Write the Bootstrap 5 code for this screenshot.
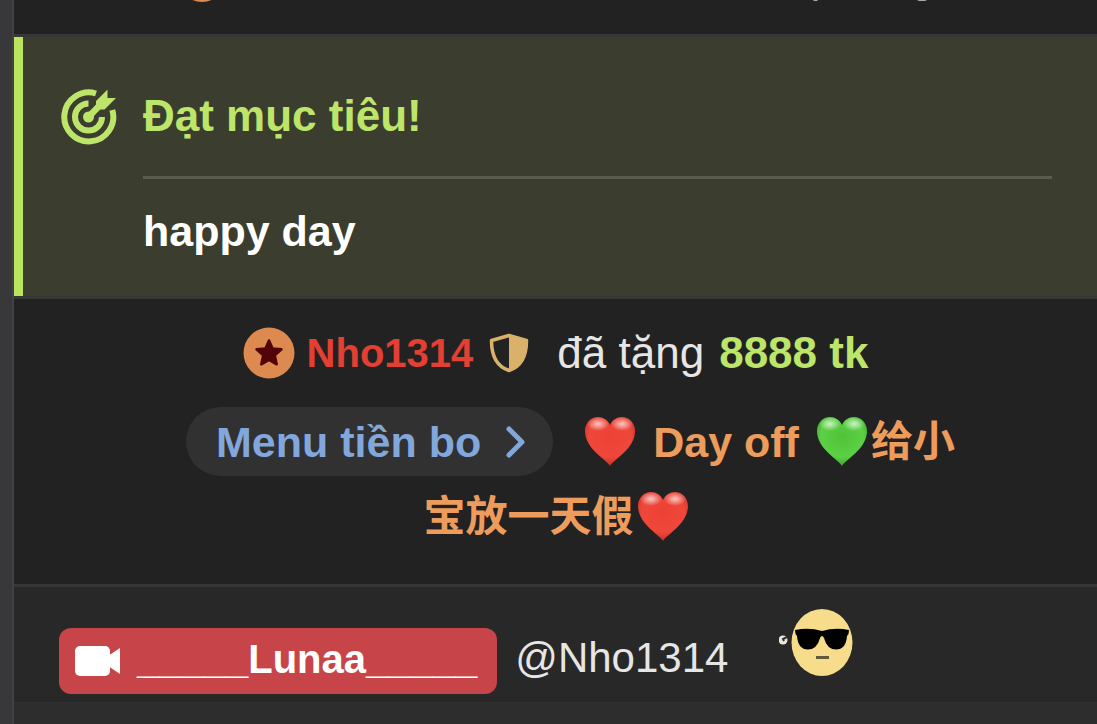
<!DOCTYPE html>
<html lang="vi">
<head>
<meta charset="utf-8">
<meta name="viewport" content="width=device-width, initial-scale=1">
<title>Chat</title>
<link href="https://cdn.jsdelivr.net/npm/bootstrap@5.3.0/dist/css/bootstrap.min.css" rel="stylesheet">
<style>
body{background:#222;color:#e6e6e6;font-family:"Liberation Sans","Noto Sans CJK SC",sans-serif;font-size:42px;line-height:48px}
.gutter{width:14px;background:#38383b;border-right:2px solid #414143}
.rule{border-bottom:3px solid #373737}
.prev-msg{height:37px}
.prev-msg .start{margin-left:163px}
.prev-msg .end{margin-right:166px}
.goal{background:#3b3d2f;border-left:9px solid #bce55f;padding:52px 45px 40px 38px;gap:26px}
.goal h1{font-size:44px;line-height:48px;color:#bce569;padding-top:3px}
.goal hr{border-top:3px solid #5a5c50;opacity:1;margin:36px 0 28px}
.goal .happy{font-size:43px;color:#fff;margin-bottom:1px}
.tip{padding:28px 16px 42px}
.who{color:#e33f33;text-decoration:none;margin:0 16px 0 12px;font-size:40px}
.gave{margin-left:28px;font-size:44px}
.amount{color:#bce569;margin-left:15px;font-size:44px}
.menu-line{margin:28px 0 16px 30px}
.menu-btn{background:#313131;color:#82a7dc;border:0;border-radius:35px;height:69px;padding:0 26px 0 30px;font-size:43px;line-height:48px;gap:24px}
.menu-btn:hover,.menu-btn:focus{background:#393939;color:#82a7dc}
.note{color:#ed9c5c}
.day-off{font-size:43px;margin:0 18px}
.reply{background:#282828;padding:21px 45px 8px;border-bottom:1px solid #303030}
.room{background:#c74548;color:#fff;border-radius:12px;height:66px;margin-top:20px;padding:0 20px 0 16px;gap:16px;font-size:40px;text-decoration:none}
.mention{color:#e6e6e6;text-decoration:none;margin-left:18px;padding-bottom:12px}
.cool{margin-left:51px}
.next-msg{background:#2d2d2d}
</style>
</head>
<body>
<svg width="0" height="0" class="position-absolute" aria-hidden="true">
<defs>
<radialGradient id="redFill" cx=".5" cy=".4" r=".7"><stop offset="0" stop-color="#ee4035"/><stop offset=".6" stop-color="#ee483b"/><stop offset="1" stop-color="#bd1f1a"/></radialGradient>
<radialGradient id="greenFill" cx=".5" cy=".4" r=".7"><stop offset="0" stop-color="#50c238"/><stop offset=".6" stop-color="#5bd144"/><stop offset="1" stop-color="#2c8f1e"/></radialGradient>
<radialGradient id="shine"><stop offset="0" stop-color="#fff" stop-opacity=".7"/><stop offset="1" stop-color="#fff" stop-opacity="0"/></radialGradient>
<path id="heartShape" d="M25 49C22 43 0 32 0 14C0 6 6 0 13 0C18 0 23 3 25 8C27 3 32 0 37 0C44 0 50 6 50 14C50 32 28 43 25 49Z"/>
<g id="glow" fill="url(#shine)"><ellipse cx="13" cy="7" rx="11" ry="7"/><ellipse cx="37" cy="7" rx="11" ry="7"/></g>
</defs>
</svg>
<div class="d-flex min-vh-100">
<aside class="gutter flex-shrink-0"></aside>
<main class="flex-grow-1 d-flex flex-column">
<div class="prev-msg rule d-flex justify-content-between overflow-hidden">
<svg class="start" width="50" height="3" viewBox="0 0 50 3" aria-hidden="true"><circle cx="25" cy="-23" r="25" fill="#dc8a50"/></svg>
<svg class="end" width="130" height="2" viewBox="0 0 130 2" aria-hidden="true"><path d="M12 0h5l-1 1h-3zM116 0h10l-2 1h-6z" fill="#aaa"/></svg>
</div>
<div class="rule">
<section class="goal d-flex align-items-start">
<svg class="flex-shrink-0" width="56" height="56" viewBox="0 0 56 56" fill="none" stroke="#bce569" aria-hidden="true">
<path d="M35 4.500A24.500 24.500 0 1 0 51.300 21" stroke-width="6"/>
<path d="M27.500 14.500A13.500 13.500 0 1 0 41 28" stroke-width="6"/>
<circle cx="27.500" cy="28" r="5.500" fill="#bce569" stroke="none"/>
<path d="M27 28.500L40 15" stroke-width="6.500"/>
<path d="M35 18.500V12L46.500 0.500V9H55L43.500 20.500H37Z" fill="#bce569" stroke="none"/>
</svg>
<div class="flex-grow-1">
<h1 class="fw-bold mb-0">Đạt mục tiêu!</h1>
<hr>
<p class="happy fw-bold">happy day</p>
</div>
</section>
</div>
<section class="tip rule">
<div class="d-flex flex-wrap align-items-center justify-content-center">
<svg width="52" height="52" viewBox="0 0 52 52" aria-hidden="true"><circle cx="26" cy="26" r="25.500" fill="#dc8a50"/><path d="M26 13.500L29.600 21.500L38.500 22.300L31.800 28.300L33.700 37.300L26 33L18.300 37.300L20.200 28.300L13.500 22.300L22.400 21.500Z" fill="#530406" stroke="#530406" stroke-width="2.500" stroke-linejoin="round"/></svg>
<a href="#" class="who fw-bold">Nho1314</a>
<svg width="40" height="40" viewBox="0 0 40 40" aria-hidden="true"><path d="M20 2.500L37.500 7.500C37.500 24 31 34 20 37.500C9 34 2.500 24 2.500 7.500Z" fill="none" stroke="#d9b16a" stroke-width="3.500" stroke-linejoin="round"/><path d="M20 2L38 7.500C38 24 31 35 20 38Z" fill="#d9b16a"/></svg>
<span class="gave">đã tặng</span>
<strong class="amount">8888 tk</strong>
</div>
<div class="menu-line d-flex flex-wrap align-items-center justify-content-center">
<button type="button" class="menu-btn btn d-inline-flex align-items-center fw-bold">Menu tiền bo
<svg width="22" height="34" viewBox="0 0 22 34" fill="none" stroke="#82a7dc" stroke-width="5" stroke-linecap="round" stroke-linejoin="round" aria-hidden="true"><path d="M4 4L17 17L4 30"/></svg></button>
<div class="note fw-bold d-flex align-items-center ms-4 ps-2">
<svg width="50" height="50" viewBox="0 0 50 50" role="img" aria-label="❤️"><use href="#heartShape" fill="url(#redFill)"/><use href="#glow"/></svg>
<span class="day-off">Day off</span>
<svg width="50" height="50" viewBox="0 0 50 50" role="img" aria-label="💚"><use href="#heartShape" fill="url(#greenFill)"/><use href="#glow"/></svg>
<span class="ms-1">给小</span>
</div>
</div>
<div class="note fw-bold d-flex align-items-center justify-content-center">
<span class="me-1">宝放一天假</span>
<svg width="50" height="50" viewBox="0 0 50 50" role="img" aria-label="❤️"><use href="#heartShape" fill="url(#redFill)"/><use href="#glow"/></svg>
</div>
</section>
<section class="reply d-flex flex-wrap align-items-end">
<a href="#" class="room d-inline-flex align-items-center fw-bold">
<svg width="46" height="30" viewBox="0 0 46 30" fill="#fff" aria-hidden="true"><rect x="0" y="0" width="35" height="30" rx="5"/><path d="M33 10L45 2V28L33 20Z"/></svg>
<span class="pb-1">_____Lunaa_____</span></a>
<a href="#" class="mention">@Nho1314</a>
<svg class="cool align-self-start" width="76" height="70" viewBox="0 0 76 70" role="img" aria-label="cool">
<circle cx="4" cy="32" r="4.500" fill="#eee6d8"/><path d="M8 29L4 31L5 33" fill="none" stroke="#333" stroke-width="2"/>
<ellipse cx="43" cy="34.500" rx="30.500" ry="33.500" fill="#f7dc8b"/>
<path d="M16 22Q30 19 43 23Q56 19 70 22L69.500 26L68 28Q67 41.500 57 41.500Q48 41.500 45 30Q43 26 41 30Q38 41.500 29 41.500Q19 41.500 18 28L16.500 26Z" fill="#000"/>
<rect x="37" y="48" width="13" height="3" fill="#62583b"/>
</svg>
</section>
<div class="next-msg flex-grow-1"></div>
</main>
</div>
<script src="https://cdn.jsdelivr.net/npm/bootstrap@5.3.0/dist/js/bootstrap.bundle.min.js"></script>
</body>
</html>
